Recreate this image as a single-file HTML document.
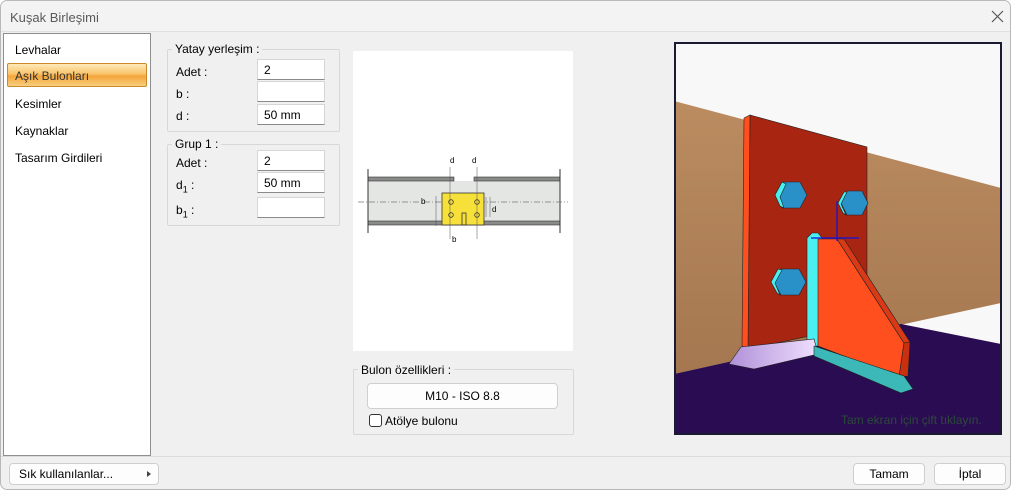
<!DOCTYPE html>
<html><head><meta charset="utf-8"><style>
*{box-sizing:border-box;margin:0;padding:0}
body{width:1013px;height:491px;overflow:hidden;background:#fff;font-family:"Liberation Sans",sans-serif;font-size:12px;color:#000;position:relative}
.a{position:absolute}
.win{left:0;top:0;width:1011px;height:490px;background:#f0f0f0;border:1px solid #b8b8b8;border-radius:7px;overflow:hidden}
.title{left:0;top:0;width:1011px;height:31px;background:#f3f3f3;border-bottom:1px solid #e0e0e0}
.lbl{font-size:12px}
.in{background:#fff;border:1px solid #d6d6d6;border-bottom:1px solid #8a8a8a;height:21px;padding:3px 6px;font-size:12px}
.grp{border:1px solid #d8d8d8;border-radius:2px}
.gt{background:#f0f0f0;padding:0 3px;font-size:12px}
.btn{background:#fdfdfd;border:1px solid #cfcfcf;border-radius:4px;text-align:center;font-size:12px}
</style></head><body>
<div class="a win">
<div class="a title"></div>
<div class="a" style="left:9px;top:9px;font-size:13px;color:#5a5a5a">Kuşak Birleşimi</div>
<svg class="a" style="left:990px;top:9px" width="13" height="13"><path d="M1 1L12 12M12 1L1 12" stroke="#555" stroke-width="1.2"/></svg>

<div class="a" style="left:2px;top:32px;width:148px;height:423px;background:#fff;border:1px solid #8f8f8f"></div>
<div class="a lbl" style="left:14px;top:42px">Levhalar</div>
<div class="a" style="left:6px;top:62px;width:140px;height:24px;border:1px solid #c98a2c;border-radius:2px;background:linear-gradient(#fde9b8,#f9c46a 45%,#f3a53a 55%,#f8cf7e)"></div>
<div class="a lbl" style="left:14px;top:68px;color:#333">Aşık Bulonları</div>
<div class="a lbl" style="left:14px;top:96px">Kesimler</div>
<div class="a lbl" style="left:14px;top:123px">Kaynaklar</div>
<div class="a lbl" style="left:14px;top:150px">Tasarım Girdileri</div>

<div class="a grp" style="left:166px;top:48px;width:173px;height:83px"></div>
<div class="a gt" style="left:171px;top:41px">Yatay yerleşim :</div>
<div class="a lbl" style="left:175px;top:64px">Adet :</div>
<div class="a in" style="left:256px;top:58px;width:68px">2</div>
<div class="a lbl" style="left:175px;top:86px">b :</div>
<div class="a in" style="left:256px;top:80px;width:68px"></div>
<div class="a lbl" style="left:175px;top:108px">d :</div>
<div class="a in" style="left:256px;top:103px;width:68px">50 mm</div>

<div class="a grp" style="left:166px;top:143px;width:173px;height:82px"></div>
<div class="a gt" style="left:171px;top:136px">Grup 1 :</div>
<div class="a lbl" style="left:175px;top:155px">Adet :</div>
<div class="a in" style="left:256px;top:149px;width:68px">2</div>
<div class="a lbl" style="left:175px;top:177px">d<sub style="font-size:9px">1</sub> :</div>
<div class="a in" style="left:256px;top:171px;width:68px">50 mm</div>
<div class="a lbl" style="left:175px;top:202px">b<sub style="font-size:9px">1</sub> :</div>
<div class="a in" style="left:256px;top:196px;width:68px"></div>

<svg class="a" style="left:352px;top:50px" width="220" height="300">
<rect width="220" height="300" fill="#fff"/>
<rect x="15" y="130" width="192" height="40" fill="#e4e6e4"/>
<rect x="15" y="126" width="86" height="4" fill="#8a8a8a" stroke="#333" stroke-width=".6"/>
<rect x="121" y="126" width="86" height="4" fill="#8a8a8a" stroke="#333" stroke-width=".6"/>
<rect x="15" y="170" width="192" height="4" fill="#8a8a8a" stroke="#333" stroke-width=".6"/>
<path d="M15 118V182M207 118V182" stroke="#333"/>
<path d="M5 151H215" stroke="#777" stroke-dasharray="6 2 1 2" stroke-width=".7"/>
<rect x="89" y="142" width="42" height="32" fill="#f7e03a" stroke="#333" stroke-width=".8"/>
<g fill="none" stroke="#333" stroke-width=".8"><circle cx="98" cy="151" r="2.3"/><circle cx="124" cy="151" r="2.3"/><circle cx="98" cy="164" r="2.3"/><circle cx="124" cy="164" r="2.3"/><rect x="109" y="162" width="4" height="12"/></g>
<g font-size="8" font-family="Liberation Sans" fill="#000"><text x="97" y="112">d</text><text x="119" y="112">d</text><text x="68" y="153">b</text><text x="139" y="161">d</text><text x="99" y="191">b</text></g>
<path d="M97 116V188M124 116V188M83 145V175M133 146V166M137 146V166" stroke="#555" stroke-width=".5"/>
</svg>

<div class="a grp" style="left:352px;top:368px;width:221px;height:66px;background:#f0f0f0"></div>
<div class="a gt" style="left:357px;top:362px">Bulon özellikleri :</div>
<div class="a btn" style="left:366px;top:382px;width:191px;height:26px;line-height:24px">M10 - ISO 8.8</div>
<div class="a" style="left:368px;top:413px;width:13px;height:13px;border:1px solid #333;border-radius:3px;background:#fff"></div>
<div class="a lbl" style="left:384px;top:413px">Atölye bulonu</div>

<svg class="a" style="left:673px;top:41px" width="328" height="393">
<rect width="328" height="393" fill="#f8f8f8"/>
<defs><linearGradient id="g" x1="0" y1="0" x2="0" y2="1"><stop offset="0" stop-color="#bb8c60"/><stop offset="1" stop-color="#a57750"/></linearGradient>
<linearGradient id="w" x1="0" y1="0" x2="1" y2="0"><stop offset="0" stop-color="#b090d8"/><stop offset="1" stop-color="#f0e0ff"/></linearGradient></defs>
<polygon points="0,59 327,146 327,261 0,332" fill="url(#g)"/>
<polygon points="0,332 227,282 327,302 327,393 0,393" fill="#2a0c52"/>
<polygon points="76,73 193,105 193,282 74,307" fill="#a82512" stroke="#222" stroke-width=".6"/>
<polygon points="70,76 76,73 74,307 68,304" fill="#ff4f1f" stroke="#222" stroke-width=".6"/>
<g stroke="#222" stroke-width=".6">
<polygon points="101,153 108,140 126,140 133,153 126,166 108,166" fill="#2a90c8"/><polygon points="101,153 108,140 112,142 106,155 110,166 106,164" fill="#4af0f0"/>
<polygon points="167,161 173,149 188,149 194,161 188,173 173,173" fill="#2a90c8"/><polygon points="164,161 170,150 173,150 167,162 172,173 169,171" fill="#4af0f0"/>
<polygon points="100,240 107,227 125,227 132,240 125,253 107,253" fill="#2a90c8"/><polygon points="97,240 104,227 108,228 101,241 106,253 103,251" fill="#4af0f0"/>
<polygon points="133,196 138,191 144,191 148,196 144,304 133,304" fill="#4af0f0"/>
<polygon points="144,197 163,197 230,301 225,335 144,304" fill="#ff4f1f"/>
<polygon points="163,197 170,197 236,300 230,301" fill="#d83a18"/>
<polygon points="230,301 236,300 234,334 225,335" fill="#c83010"/>
<polygon points="67,305 140,297 144,312 80,327 55,322" fill="url(#w)"/>
<polygon points="140,304 230,334 239,347 227,351 140,314" fill="#3cb8b8"/>
</g>
<path d="M163 159V199M137 196H185" stroke="#1010e0" stroke-width="1.2"/>
<text x="167" y="382" font-size="12" fill="#2d4a3a" font-family="Liberation Sans">Tam ekran için çift tıklayın.</text>
<rect x="1" y="1" width="326" height="391" fill="none" stroke="#1a1a33" stroke-width="2"/>
</svg>

<div class="a" style="left:0;top:455px;width:1011px;height:1px;background:#dcdcdc"></div>
<div class="a btn" style="left:8px;top:462px;width:150px;height:22px;line-height:20px;text-align:left;padding-left:9px">Sık kullanılanlar...</div>
<div class="a" style="left:146px;top:470px;width:0;height:0;border-left:4px solid #444;border-top:3px solid transparent;border-bottom:3px solid transparent"></div>
<div class="a btn" style="left:852px;top:462px;width:72px;height:22px;line-height:20px">Tamam</div>
<div class="a btn" style="left:933px;top:462px;width:72px;height:22px;line-height:20px">İptal</div>
</div>
</body></html>
